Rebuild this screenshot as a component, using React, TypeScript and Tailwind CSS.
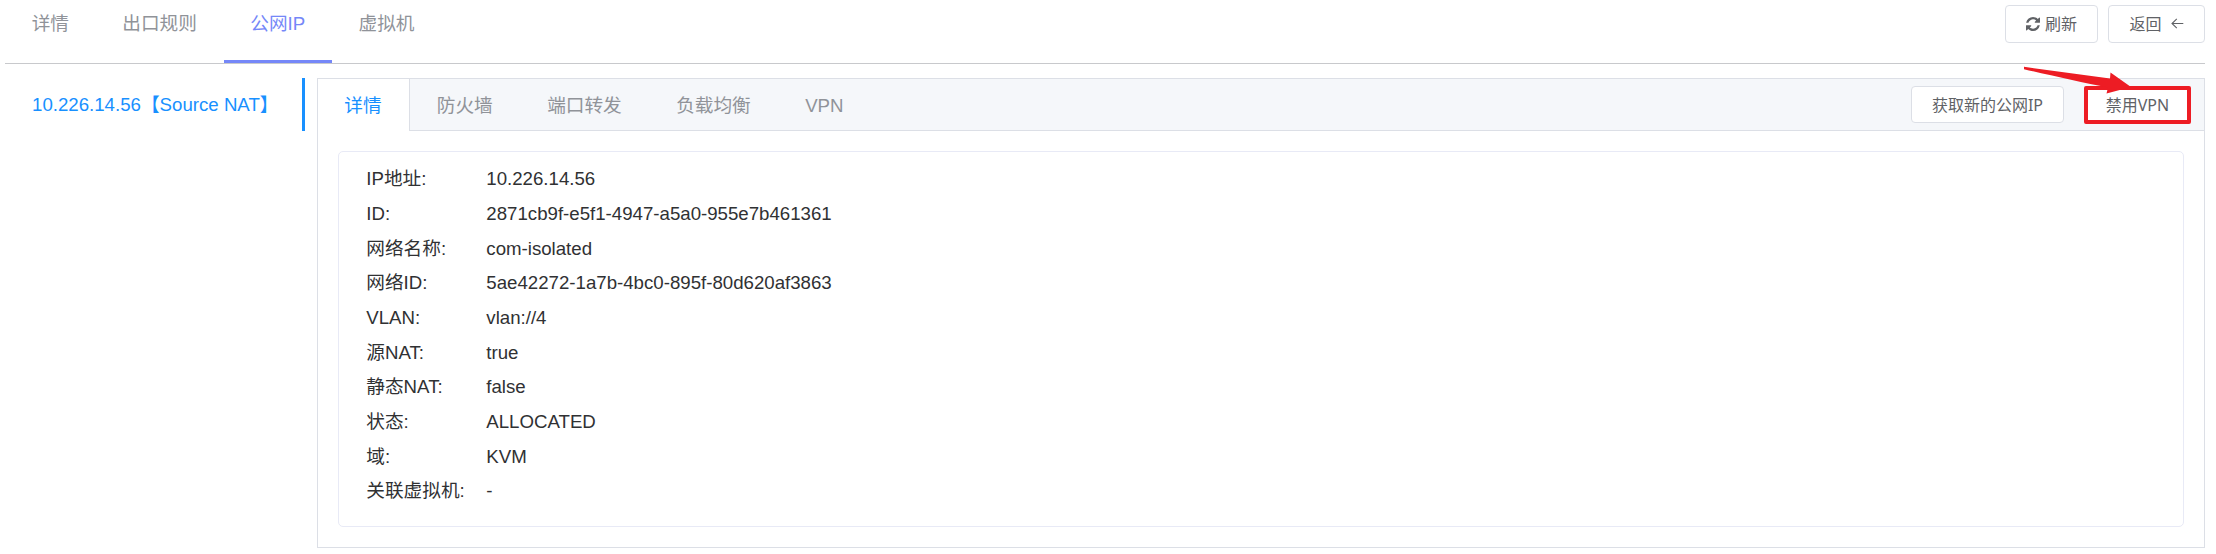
const navTabs = ["详情", "出口规则", "公网IP", "虚拟机"];
const detailTabs = ["详情", "防火墙", "端口转发", "负载均衡", "VPN"];
const rows: [string, string][] = [
  ["IP地址:", "10.226.14.56"],
  ["ID:", "2871cb9f-e5f1-4947-a5a0-955e7b461361"],
  ["网络名称:", "com-isolated"],
  ["网络ID:", "5ae42272-1a7b-4bc0-895f-80d620af3863"],
  ["VLAN:", "vlan://4"],
  ["源NAT:", "true"],
  ["静态NAT:", "false"],
  ["状态:", "ALLOCATED"],
  ["域:", "KVM"],
  ["关联虚拟机:", "-"],
];

function RefreshIcon() {
  return (
    <svg className="mr-[5px] h-[14px] w-[14px]" viewBox="0 128 1536 1536" fill="currentColor">
      <path d="M1511 1056q0 5-1 7-64 268-268 434.5t-478 166.5q-146 0-282.5-55t-243.5-157l-129 129q-19 19-45 19t-45-19-19-45v-448q0-26 19-45t45-19h448q26 0 45 19t19 45-19 45l-137 137q71 66 161 102t187 36q134 0 250-65t186-179q11-17 53-117 8-23 30-23h192q13 0 22.5 9.5t9.5 22.5zm25-800v448q0 26-19 45t-45 19h-448q-26 0-45-19t-19-45 19-45l138-138q-148-137-349-137-134 0-250 65t-186 179q-11 17-53 117-8 23-30 23h-199q-13 0-22.5-9.5t-9.5-22.5v-7q65-268 270-434.5t480-166.5q146 0 284 55.5t245 156.5l130-129q19-19 45-19t45 19 19 45z" />
    </svg>
  );
}

function BackArrow() {
  return (
    <svg className="ml-[9px] h-[12px] w-[13px]" viewBox="0 0 13 12" fill="none" stroke="currentColor" strokeWidth="1.1">
      <path d="M12.3 5.5H1.2M5.8 0.8L1 5.5L5.8 10.2" />
    </svg>
  );
}

export default function App() {
  return (
    <div className="h-[554px] w-[2216px] overflow-hidden bg-white pl-[5px] pr-[11px] font-['Liberation_Sans','Noto_Sans_CJK_SC',sans-serif] text-[18.67px] text-[#303133]">
      <header className="flex h-[64px] items-start justify-between border-b border-[#c8c9cc]">
        <nav className="flex h-[63px]">
          {navTabs.map((tab, i) => (
            <div
              key={tab}
              className={
                i === 2
                  ? "h-[63px] border-b-3 border-[#7587f8] px-[26.67px] leading-[47px] text-[#7587f8]"
                  : "h-[63px] px-[26.67px] leading-[47px] text-[#909399]"
              }
            >
              {tab}
            </div>
          ))}
        </nav>
        <div className="flex gap-[10px] pt-[5px] font-['Noto_Sans','Noto_Sans_CJK_SC',sans-serif] text-[16px] text-[#606266]">
          <button className="flex h-[38px] w-[93px] items-center justify-center rounded-[4px] border border-[#dcdfe6] bg-white">
            <RefreshIcon />
            刷新
          </button>
          <button className="flex h-[38px] w-[97px] items-center justify-center rounded-[4px] border border-[#dcdfe6] bg-white">
            返回
            <BackArrow />
          </button>
        </div>
      </header>

      <main className="flex pt-[14px]">
        <aside className="mr-[12px] h-[53px] w-[300px] border-r-3 border-[#1890ff] pl-[27px] leading-[53px] whitespace-nowrap text-[#1890ff]">
          10.226.14.56【Source NAT】
        </aside>
        <section className="h-[470px] w-[1888px] border border-[#dcdfe6]">
          <div className="flex h-[52px] items-stretch justify-between bg-[#f5f7fa]">
            <div className="flex">
              {detailTabs.map((tab, i) => (
                <div
                  key={tab}
                  className={
                    i === 0
                      ? "border-r border-[#dcdfe6] bg-white pr-[27px] pl-[26.3px] leading-[53px] text-[#1890ff]"
                      : "border-b border-b-[#dcdfe6] px-[27.2px] leading-[53px] text-[#909399]"
                  }
                >
                  {tab}
                </div>
              ))}
            </div>
            <div className="flex flex-1 items-start justify-end gap-[20px] border-b border-[#dcdfe6] pt-[7px] pr-[13px] font-['Noto_Sans','Noto_Sans_CJK_SC',sans-serif] text-[16px] text-[#606266]">
              <button className="h-[37px] w-[153px] rounded-[4px] border border-[#dcdfe6] bg-white leading-[34px]">获取新的公网IP</button>
              <div className="relative">
                <button className="h-[38px] w-[107px] rounded-[2px] border-4 border-[#ed1c24] bg-white leading-[28px]">禁用VPN</button>
                <svg className="absolute top-[-20px] left-[-60px] h-[28px] w-[108px]" viewBox="0 0 108 28" fill="#ed1c24">
                  <path d="M0 0.8L86 12.5L86.5 6.5L107 21L82.5 27.5L84 21.5C60 17 25 9 0 3.2Z" />
                </svg>
              </div>
            </div>
          </div>
          <div className="mx-[20px] mt-[20px] h-[376px] rounded-[5px] border border-[#e8eaf6] pt-[10px] pl-[27.3px]">
            {rows.map(([label, value]) => (
              <div key={label} className="flex h-[34.67px] items-center">
                <div className="w-[120px]">{label}</div>
                <div>{value}</div>
              </div>
            ))}
          </div>
        </section>
      </main>
    </div>
  );
}
